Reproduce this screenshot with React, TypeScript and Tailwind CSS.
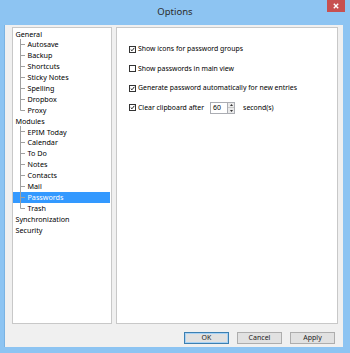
import { Fragment } from 'react'

type Node = { label: string; children?: string[] }

const TREE: Node[] = [
  {
    label: 'General',
    children: ['Autosave', 'Backup', 'Shortcuts', 'Sticky Notes', 'Spelling', 'Dropbox', 'Proxy'],
  },
  {
    label: 'Modules',
    children: ['EPIM Today', 'Calendar', 'To Do', 'Notes', 'Contacts', 'Mail', 'Passwords', 'Trash'],
  },
  { label: 'Synchronization' },
  { label: 'Security' },
]

const SELECTED = 'Passwords'

function Connector({ last }: { last: boolean }) {
  return (
    <svg width="14" height="11" className="shrink-0">
      <line x1="7.5" y1="0" x2="7.5" y2={last ? 5.5 : 11} stroke="#a0a0a0" strokeWidth="1" />
      <line x1="7.5" y1="5.5" x2="12" y2="5.5" stroke="#a0a0a0" strokeWidth="1" />
    </svg>
  )
}

function Check({ checked }: { checked: boolean }) {
  return (
    <span className="w-[7px] h-[7px] border border-[#333] bg-white flex items-center justify-center shrink-0">
      {checked && (
        <svg width="7" height="7" viewBox="0 0 7 7">
          <path d="M1 3.5 L2.8 5.3 L6 1.2" fill="none" stroke="#111" strokeWidth="1.3" />
        </svg>
      )}
    </span>
  )
}

function Btn({ label, primary }: { label: string; primary?: boolean }) {
  return (
    <div
      className={`w-[45px] h-[12px] flex items-center justify-center bg-[#e1e1e1] border text-[7px] text-[#222] ${
        primary ? 'border-[#3c7fb1] shadow-[inset_0_0_0_1px_#a8d2f5]' : 'border-[#adadad]'
      }`}
    >
      {label}
    </div>
  )
}

export default function App() {
  return (
    <div
      className="w-[350px] h-[353px] bg-[#8dc4f2] flex flex-col overflow-hidden"
      style={{ fontFamily: '"Noto Sans", "Open Sans", sans-serif' }}
    >
      {/* Title bar */}
      <div className="h-[25px] grid grid-cols-[1fr_auto_1fr] shrink-0">
        <div />
        <span className="text-[9.5px] text-[#2b2b2b] self-center -mt-[1px]">Options</span>
        <div className="flex justify-end items-start pr-[5px]">
          <div className="w-[18px] h-[12px] bg-[#c75050] flex items-center justify-center">
            <svg width="6" height="6" viewBox="0 0 6 6">
              <path d="M0.8 0.8 L5.2 5.2 M5.2 0.8 L0.8 5.2" stroke="#fff" strokeWidth="1.4" />
            </svg>
          </div>
        </div>
      </div>

      {/* Body */}
      <div className="flex-1 ml-[4px] mr-[7px] mb-[6px] bg-[#f0f0f0] border-l border-[#7ab3e3] flex flex-col pt-[2px] pl-[7px] pr-[5px]">
        <div className="flex h-[297px] gap-[4px]">
          {/* Tree */}
          <div className="w-[100px] bg-white border border-[#c8c8c8] pt-[0.5px] text-[7.2px] text-black leading-[10.9px]">
            {TREE.map((n) => (
              <Fragment key={n.label}>
                <div className="h-[10.9px] pl-[2.5px] whitespace-nowrap">{n.label}</div>
                {n.children?.map((c, i) => {
                  const sel = c === SELECTED
                  const last = i === (n.children?.length ?? 0) - 1
                  return (
                    <div
                      key={c}
                      className={`h-[10.9px] flex items-center mr-[1px] whitespace-nowrap ${
                        sel ? 'bg-[#3399ff] text-white' : ''
                      }`}
                    >
                      <Connector last={last} />
                      <span className="ml-[0.5px]">{c}</span>
                    </div>
                  )
                })}
              </Fragment>
            ))}
          </div>

          {/* Settings panel */}
          <div className="w-[222px] bg-white border border-[#c8c8c8] pl-[12px] pt-[16px] text-[6.9px] text-black flex flex-col gap-[8.3px]">
            <div className="flex items-center gap-[2px] h-[11px]">
              <Check checked />
              <span>Show icons for password groups</span>
            </div>
            <div className="flex items-center gap-[2px] h-[11px]">
              <Check checked={false} />
              <span>Show passwords in main view</span>
            </div>
            <div className="flex items-center gap-[2px] h-[11px]">
              <Check checked />
              <span>Generate password automatically for new entries</span>
            </div>
            <div className="flex items-center gap-[2px] h-[12px]">
              <Check checked />
              <span>Clear clipboard after</span>
              <div className="ml-[4px] flex h-[12px]">
                <div className="w-[18px] h-[12px] border border-[#abadb3] flex items-center pl-[2px]">60</div>
                <div className="w-[7px] h-[12px] border border-l-0 border-[#abadb3] flex flex-col">
                  <div className="flex-1 bg-[#eaeaea] border-b border-[#c8c8c8] flex items-center justify-center">
                    <svg width="3" height="2" viewBox="0 0 3 2"><path d="M0 2 L1.5 0 L3 2Z" fill="#333" /></svg>
                  </div>
                  <div className="flex-1 bg-[#eaeaea] flex items-center justify-center">
                    <svg width="3" height="2" viewBox="0 0 3 2"><path d="M0 0 L1.5 2 L3 0Z" fill="#333" /></svg>
                  </div>
                </div>
              </div>
              <span className="ml-[6px]">second(s)</span>
            </div>
          </div>
        </div>

        {/* Buttons */}
        <div className="flex justify-end gap-[8px] pr-[3px] mt-[8px]">
          <Btn label="OK" primary />
          <Btn label="Cancel" />
          <Btn label="Apply" />
        </div>
      </div>
    </div>
  )
}
